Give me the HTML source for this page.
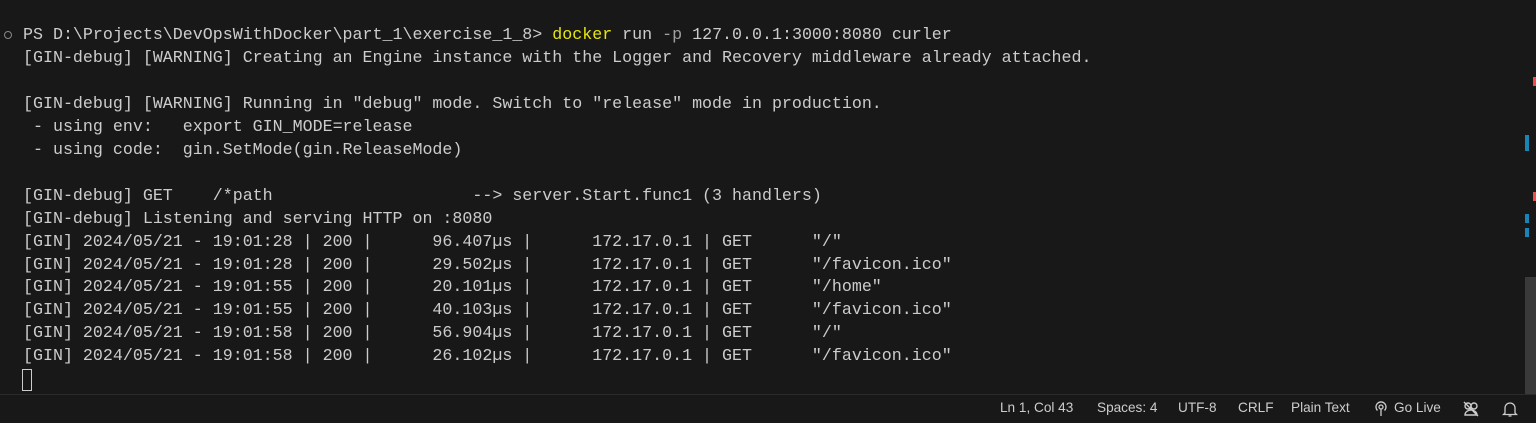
<!DOCTYPE html>
<html><head><meta charset="utf-8"><style>
html,body{margin:0;padding:0;width:1536px;height:422px;background:#181818;overflow:hidden}
pre{position:absolute;left:23px;top:24px;margin:0;font-family:"Liberation Mono",monospace;font-size:16.65px;line-height:22.95px;color:#cccccc;white-space:pre}
.y{color:#e5e510}.g{color:#a0a0a0}
.sb{position:absolute;left:0;top:394px;width:1536px;height:28px;background:#181818;border-top:1px solid #2b2b2b;font-family:"Liberation Sans",sans-serif;font-size:13.6px;color:#cccccc}
.sb span{position:absolute;top:5px}
</style></head><body>
<div style="position:absolute;left:4px;top:31px;width:6px;height:6px;border:1.5px solid #888;border-radius:50%"></div>
<pre>PS D:\Projects\DevOpsWithDocker\part_1\exercise_1_8> <span class="y">docker</span> run <span class="g">-p</span> 127.0.0.1:3000:8080 curler
[GIN-debug] [WARNING] Creating an Engine instance with the Logger and Recovery middleware already attached.

[GIN-debug] [WARNING] Running in "debug" mode. Switch to "release" mode in production.
 - using env:   export GIN_MODE=release
 - using code:  gin.SetMode(gin.ReleaseMode)

[GIN-debug] GET    /*path                    --> server.Start.func1 (3 handlers)
[GIN-debug] Listening and serving HTTP on :8080
[GIN] 2024/05/21 - 19:01:28 | 200 |      96.407µs |      172.17.0.1 | GET      "/"
[GIN] 2024/05/21 - 19:01:28 | 200 |      29.502µs |      172.17.0.1 | GET      "/favicon.ico"
[GIN] 2024/05/21 - 19:01:55 | 200 |      20.101µs |      172.17.0.1 | GET      "/home"
[GIN] 2024/05/21 - 19:01:55 | 200 |      40.103µs |      172.17.0.1 | GET      "/favicon.ico"
[GIN] 2024/05/21 - 19:01:58 | 200 |      56.904µs |      172.17.0.1 | GET      "/"
[GIN] 2024/05/21 - 19:01:58 | 200 |      26.102µs |      172.17.0.1 | GET      "/favicon.ico"</pre>
<div style="position:absolute;left:22px;top:369px;width:8px;height:20px;border:1px solid #cccccc"></div>
<div style="position:absolute;left:1525px;top:277px;width:11px;height:117px;background:#3a3a3a"></div>
<div style="position:absolute;left:1533px;top:77px;width:3px;height:9px;background:#f14c4c"></div>
<div style="position:absolute;left:1533px;top:192px;width:3px;height:9px;background:#f14c4c"></div>
<div style="position:absolute;left:1525px;top:135px;width:4px;height:16px;background:#1a85b5"></div>
<div style="position:absolute;left:1525px;top:214px;width:4px;height:9px;background:#1a85b5"></div>
<div style="position:absolute;left:1525px;top:228px;width:4px;height:9px;background:#1a85b5"></div>
<div class="sb">
<span style="left:1000px">Ln 1, Col 43</span>
<span style="left:1097px">Spaces: 4</span>
<span style="left:1178px">UTF-8</span>
<span style="left:1238px">CRLF</span>
<span style="left:1291px">Plain Text</span>
<svg style="position:absolute;left:1373px;top:6px" width="16" height="16" viewBox="0 0 16 16" fill="none" stroke="#ccc" stroke-width="1.3"><circle cx="8" cy="6" r="2"/><path d="M4.5 9.5a5 5 0 1 1 7 0M8 8v7"/></svg>
<span style="left:1394px">Go Live</span>
<svg style="position:absolute;left:1462px;top:5px" width="18" height="18" viewBox="0 0 18 18" fill="none" stroke="#ccc" stroke-width="1.4"><circle cx="6" cy="6" r="3"/><circle cx="12" cy="6" r="3"/><path d="M3 15c0-3 3-5 6-5s6 2 6 5zM2 2l14 14"/></svg>
<svg style="position:absolute;left:1502px;top:5px" width="16" height="18" viewBox="0 0 16 18" fill="none" stroke="#ccc" stroke-width="1.3"><path d="M3 13V8a5 5 0 0 1 10 0v5l1.5 1.5h-13zM6.5 16h3"/></svg>
</div>
</body></html>
